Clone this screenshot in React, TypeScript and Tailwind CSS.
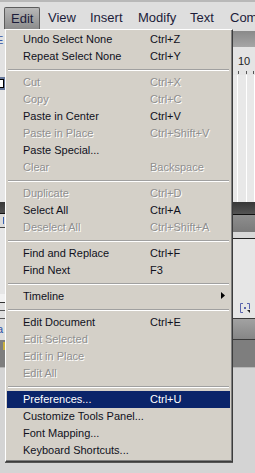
import React from "react";

type Item =
  | { type: "sep" }
  | { type: "item"; label: string; shortcut?: string; disabled?: boolean; active?: boolean; sub?: boolean };

const items: Item[] = [
  { type: "item", label: "Undo Select None", shortcut: "Ctrl+Z" },
  { type: "item", label: "Repeat Select None", shortcut: "Ctrl+Y" },
  { type: "sep" },
  { type: "item", label: "Cut", shortcut: "Ctrl+X", disabled: true },
  { type: "item", label: "Copy", shortcut: "Ctrl+C", disabled: true },
  { type: "item", label: "Paste in Center", shortcut: "Ctrl+V" },
  { type: "item", label: "Paste in Place", shortcut: "Ctrl+Shift+V", disabled: true },
  { type: "item", label: "Paste Special..." },
  { type: "item", label: "Clear", shortcut: "Backspace", disabled: true },
  { type: "sep" },
  { type: "item", label: "Duplicate", shortcut: "Ctrl+D", disabled: true },
  { type: "item", label: "Select All", shortcut: "Ctrl+A" },
  { type: "item", label: "Deselect All", shortcut: "Ctrl+Shift+A", disabled: true },
  { type: "sep" },
  { type: "item", label: "Find and Replace", shortcut: "Ctrl+F" },
  { type: "item", label: "Find Next", shortcut: "F3" },
  { type: "sep" },
  { type: "item", label: "Timeline", sub: true },
  { type: "sep" },
  { type: "item", label: "Edit Document", shortcut: "Ctrl+E" },
  { type: "item", label: "Edit Selected", disabled: true },
  { type: "item", label: "Edit in Place", disabled: true },
  { type: "item", label: "Edit All", disabled: true },
  { type: "sep" },
  { type: "item", label: "Preferences...", shortcut: "Ctrl+U", active: true },
  { type: "item", label: "Customize Tools Panel..." },
  { type: "item", label: "Font Mapping..." },
  { type: "item", label: "Keyboard Shortcuts..." },
];

function MenuRow({ it }: { it: Extract<Item, { type: "item" }> }) {
  const color = it.active
    ? "text-white bg-[#0a246a]"
    : it.disabled
    ? "text-[#8f8f8f] [text-shadow:1px_1px_0_#ffffff]"
    : "text-[#10101c]";
  return (
    <div className={`relative flex h-[17px] items-center whitespace-nowrap ${color}`}>
      <span className="w-[143px] shrink-0 pl-[16px]">{it.label}</span>
      {it.shortcut && <span>{it.shortcut}</span>}
      {it.sub && (
        <svg className="absolute left-[214px] top-[4px]" width="4" height="7" viewBox="0 0 4 7">
          <polygon points="0,0 4,3.5 0,7" fill="#000" />
        </svg>
      )}
    </div>
  );
}

export default function App() {
  return (
    <div className="relative flex h-[473px] w-[255px] flex-col overflow-hidden bg-[#d4d4d4] font-['Liberation_Sans',Arial,sans-serif]">
      {/* Menu bar */}
      <div className="flex h-[29px] shrink-0 items-end overflow-hidden border-t-[2px] border-[#b8b8b8] bg-[#dedede] pl-[4px] text-[13px] text-[#1c1c3a]">
        <div className="flex h-[22px] w-[36px] shrink-0 items-center rounded-t-[2px] border border-b-0 border-[#5c5c5c] bg-gradient-to-b from-[#b8b8b8] to-[#8c8c8c] pl-[6px]">
          Edit
        </div>
        <div className="flex h-[22px] w-[50px] shrink-0 items-center pl-[8px]">View</div>
        <div className="flex h-[22px] w-[48px] shrink-0 items-center">Insert</div>
        <div className="flex h-[22px] w-[52px] shrink-0 items-center">Modify</div>
        <div className="flex h-[22px] w-[40px] shrink-0 items-center">Text</div>
        <div className="flex h-[22px] shrink-0 items-center whitespace-nowrap">Commands</div>
      </div>

      {/* Workspace behind menu */}
      <div className="flex min-h-0 flex-1">
        {/* Left strip */}
        <div className="flex w-[5px] shrink-0 flex-col overflow-hidden">
          <div className="h-[48px] bg-[#e2e2e2] pt-[6px] text-[11px] leading-[11px] text-[#3454a4]">
            <span className="block -ml-[4px]">E</span>
          </div>
          <div className="flex h-[13px] items-center bg-[#66789c]">
            <div className="h-[9px] w-[4px] border border-l-0 border-black bg-white" />
          </div>
          <div className="h-[112px] bg-[#e6e6e6]" />
          <div className="h-[11px] bg-gradient-to-b from-[#383838] to-[#505050]" />
          <div className="h-[1px] bg-[#111]" />
          <div className="flex h-[13px] items-center bg-[#dcdcdc]">
            <div className="ml-[3px] h-[7px] w-[1px] bg-[#3a62b0]" />
          </div>
          <div className="h-[1px] bg-[#444]" />
          <div className="h-[66px] bg-[#e6e6e6]" />
          <div className="h-[8px] bg-[#f2f2f2]" />
          <div className="h-[1px] bg-[#333]" />
          <div className="h-[7px] bg-[#e0e0e0]" />
          <div className="h-[1px] bg-[#555]" />
          <div className="h-[7px] bg-[#e0e0e0]" />
          <div className="h-[1px] bg-[#555]" />
          <div className="flex h-[21px] items-center bg-[#dedede] text-[11px] text-[#2a50a8]">
            <span className="-ml-[3px]">a</span>
          </div>
          <div className="h-[27px] bg-[#7e7e7e]">
            <div className="ml-[3px] mt-[2px] h-[8px] w-[2px] bg-[#c8b040]" />
          </div>
          <div className="h-[1px] bg-[#b4b4b4]" />
          <div className="flex-1 bg-[#d4d4d4]" />
        </div>

        <div className="flex-1" />

        {/* Right strip */}
        <div className="flex w-[22px] shrink-0 flex-col overflow-hidden">
          <div className="h-[2px] bg-[#dedede]" />
          <div className="h-[16px] bg-gradient-to-b from-[#8a8a8a] to-[#a6a6a6]" />
          <div className="relative h-[28px] bg-[#e4e4e4]">
            <span className="absolute left-[5px] top-[9px] text-[11px] leading-[11px] text-[#222]">10</span>
            <div className="absolute left-[5px] top-[24px] h-[3px] w-[1px] bg-[#555]" />
            <div className="absolute left-[13px] top-[24px] h-[3px] w-[1px] bg-[#555]" />
            <div className="absolute left-[20px] top-[24px] h-[3px] w-[1px] bg-[#555]" />
          </div>
          <div className="flex h-[127px] bg-[#e8e8e8]">
            <div className="w-[4px]" />
            <div className="w-[1px] bg-white" />
            <div className="w-[8px]" />
            <div className="w-[1px] bg-white" />
            <div className="w-[7px]" />
            <div className="w-[1px] bg-white" />
          </div>
          <div className="h-[12px] bg-gradient-to-b from-[#383838] to-[#545454]" />
          <div className="h-[1px] bg-[#111]" />
          <div className="h-[17px] bg-gradient-to-b from-[#8e8e8e] to-[#7a7a7a]" />
          <div className="h-[6px] bg-[#d8d8d8]" />
          <div className="h-[1px] bg-[#222]" />
          <div className="relative h-[79px] bg-[#e6e6e6]">
            <svg className="absolute left-[7px] top-[64px]" width="10" height="10" viewBox="0 0 10 10">
              <path d="M3 0.5H0.5V9.5H3" fill="none" stroke="#5a64ac" strokeWidth="1" />
              <path d="M7 0.5H9.5V6" fill="none" stroke="#5a64ac" strokeWidth="1" />
              <rect x="4" y="4" width="2" height="2" fill="#5a64ac" />
              <polygon points="7,7 10,7 10,10" fill="#222" />
            </svg>
          </div>
          <div className="h-[1px] bg-[#3a3a3a]" />
          <div className="h-[20px] bg-gradient-to-b from-[#a2a2a2] to-[#868686]" />
          <div className="h-[1px] bg-[#3a3a3a]" />
          <div className="h-[27px] bg-[#7e7e7e]" />
          <div className="h-[1px] bg-[#b8b8b8]" />
          <div className="flex-1 bg-[#d4d4d4]" />
        </div>
      </div>

      {/* Dropdown menu */}
      <div className="absolute left-[5px] top-[29px] w-[228px] border-l border-t border-l-white border-t-white border-r border-b border-r-[#3c3c3c] border-b-[#3c3c3c] shadow-[0_1px_0_#555]">
        <div className="border-r border-b border-r-[#808080] border-b-[#808080] bg-[#d4d0c8] px-[1px] pt-[1px] pb-[1px] text-[11px]">
          {items.map((it, i) =>
            it.type === "sep" ? (
              <div key={i} className="h-[9px] px-[1px] pt-[4px]">
                <div className="h-[2px] border-t border-b border-t-[#a0a0a0] border-b-white" />
              </div>
            ) : (
              <MenuRow key={i} it={it} />
            )
          )}
        </div>
      </div>
    </div>
  );
}
